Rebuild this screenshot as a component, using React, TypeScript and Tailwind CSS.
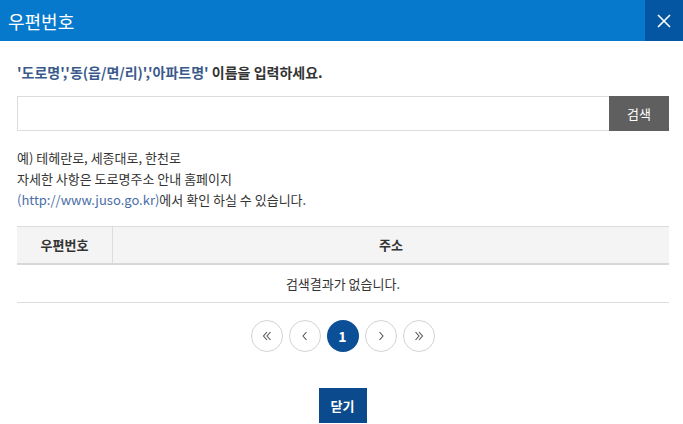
import React from "react";

const font = { fontFamily: '"Noto Sans CJK KR", "Noto Sans", sans-serif' };

function Circle({ children, active }: { children: React.ReactNode; active?: boolean }) {
  return (
    <div
      className={
        active
          ? "w-[32px] h-[32px] rounded-full bg-[#0b4f96] text-white flex items-center justify-center text-[14px] font-semibold"
          : "w-[32px] h-[32px] rounded-full border border-[#d3d3d3] bg-white text-[#555] flex items-center justify-center"
      }
    >
      {children}
    </div>
  );
}

export default function App() {
  return (
    <div className="w-[683px] h-[424px] bg-white overflow-hidden" style={font}>
      <div className="h-[41px] bg-[#0679cd] flex items-center justify-between">
        <div className="pl-[8px] text-white text-[18px] leading-none">우편번호</div>
        <div className="w-[38px] h-[41px] bg-[#0556a2] flex items-center justify-center">
          <svg width="14" height="14" viewBox="0 0 14 14">
            <path d="M1 1L13 13M13 1L1 13" stroke="white" strokeWidth="1.6" />
          </svg>
        </div>
      </div>
      <div className="px-[17px] pt-[21px]">
        <div className="text-[14px] font-bold text-[#333] leading-[20px]">
          <span className="text-[#3a5a8c]">'도로명','동(읍/면/리)','아파트명'</span> 이름을 입력하세요.
        </div>
        <div className="mt-[14px] flex h-[35px] w-[652px]">
          <div className="flex-1 border border-[#dcdcdc] border-r-0"></div>
          <div className="w-[60px] bg-[#5f5f5f] text-white text-[13px] flex items-center justify-center">검색</div>
        </div>
        <div className="mt-[16px] text-[13px] text-[#333] leading-[21px]">
          <div>예) 테헤란로, 세종대로, 한천로</div>
          <div>자세한 사항은 도로명주소 안내 홈페이지</div>
          <div>
            <span className="text-[#4a6ea8]">(http://www.juso.go.kr)</span>에서 확인 하실 수 있습니다.
          </div>
        </div>
        <div className="mt-[16px] w-[652px] text-[13px] text-[#333]">
          <div className="flex h-[39px] bg-[#f4f4f4] border-t border-[#dcdcdc] border-b-2 border-b-[#d8d8d8]">
            <div className="w-[96px] border-r border-[#dcdcdc] flex items-center justify-center font-bold">우편번호</div>
            <div className="flex-1 flex items-center justify-center font-bold">주소</div>
          </div>
          <div className="h-[38px] flex items-center justify-center border-b border-[#dcdcdc]">검색결과가 없습니다.</div>
        </div>
        <div className="mt-[17px] flex justify-center gap-[6px] pl-[2px]">
          <Circle>
            <svg width="12" height="12" viewBox="0 0 12 12" fill="none" stroke="#555" strokeWidth="1.1">
              <path d="M6 2L2.5 6L6 10M9.5 2L6 6L9.5 10" />
            </svg>
          </Circle>
          <Circle>
            <svg width="12" height="12" viewBox="0 0 12 12" fill="none" stroke="#555" strokeWidth="1.1">
              <path d="M7.5 2L4 6L7.5 10" />
            </svg>
          </Circle>
          <Circle active>1</Circle>
          <Circle>
            <svg width="12" height="12" viewBox="0 0 12 12" fill="none" stroke="#555" strokeWidth="1.1">
              <path d="M4.5 2L8 6L4.5 10" />
            </svg>
          </Circle>
          <Circle>
            <svg width="12" height="12" viewBox="0 0 12 12" fill="none" stroke="#555" strokeWidth="1.1">
              <path d="M2.5 2L6 6L2.5 10M6 2L9.5 6L6 10" />
            </svg>
          </Circle>
        </div>
        <div className="mt-[36px] flex justify-center pl-[2px]">
          <div className="w-[48px] h-[35px] bg-[#0b4a8c] text-white text-[13px] font-bold flex items-center justify-center">닫기</div>
        </div>
      </div>
    </div>
  );
}
